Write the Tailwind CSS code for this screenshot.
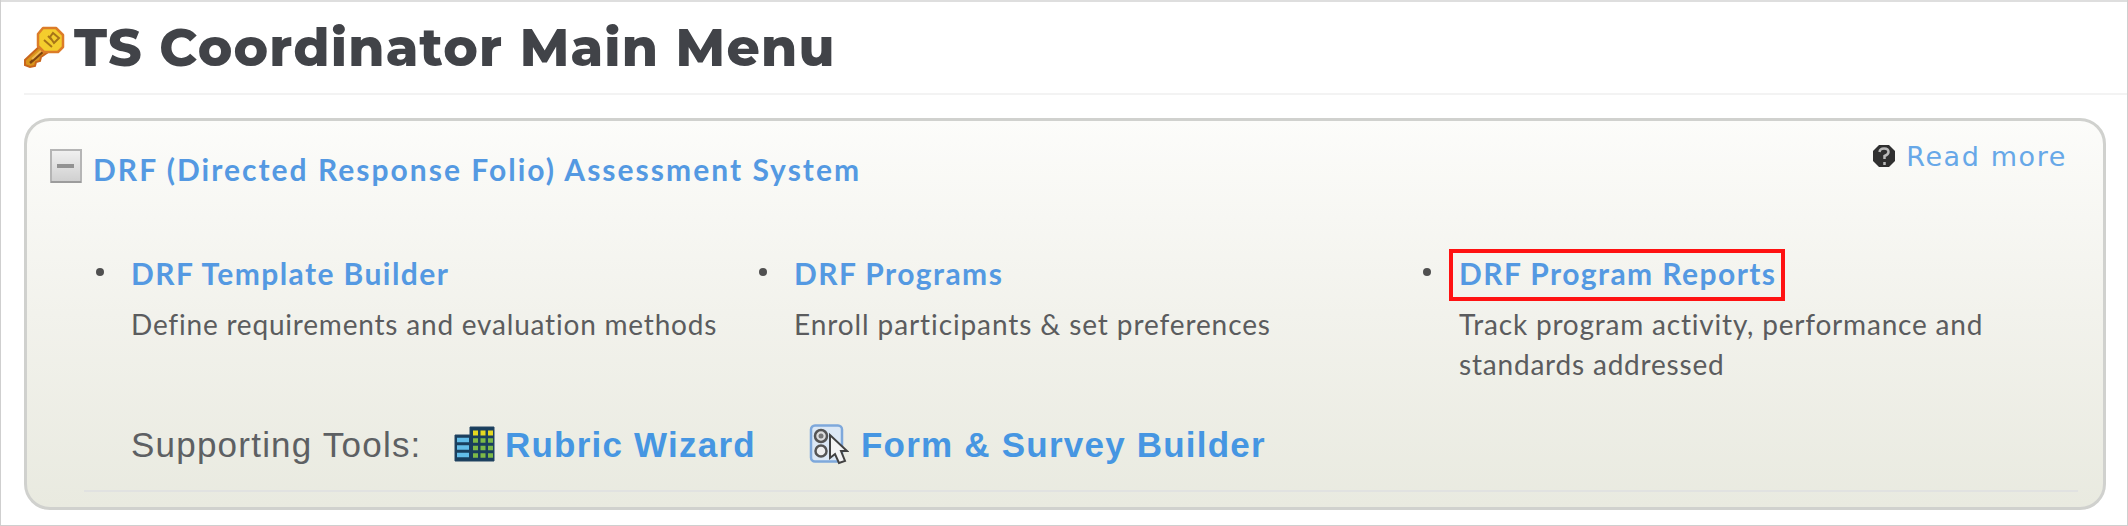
<!DOCTYPE html>
<html lang="en">
<head>
<meta charset="utf-8">
<title>TS Coordinator Main Menu</title>
<script src="https://cdn.jsdelivr.net/npm/@tailwindcss/browser@4"></script>
</head>
<body class="bg-white">
<main class="w-[2128px] h-[526px] overflow-hidden border-l border-r border-b border-[#cfcfcf] pl-[23px]">
  <div class="-ml-[23px] h-[2px] bg-[#dedede]"></div>
  <header class="flex h-[93px] border-b-2 border-[#f3f3f3]">
    <svg class="mt-[23px] w-[42px] h-[44px] shrink-0" viewBox="0 0 42 44">
      <path d="M17 20 L1 35 L1 40 L6 42 L11 41 L12 37 L16 36 L17 32 L24 27Z" fill="#d9951c" stroke="#c9651c" stroke-width="2"/>
      <path d="M6 38 L22 24" stroke="#7d4310" stroke-width="2.5"/>
      <path d="M8 34 L20 23" stroke="#f0b850" stroke-width="2"/>
      <path d="M19 3 H32 L39 10 V22 L34 27 H20 L14 21 V9Z" fill="#f4cd2d" stroke="#dc7c28" stroke-width="2.5" stroke-linejoin="round"/>
      <path d="M20 15 L28 22 M24 11 L28 15 M29 8 L35 13 L30 18 L26 12Z" stroke="#a77418" stroke-width="2" fill="none"/>
    </svg>
    <h1 class="ml-[8px] mt-[14px] h-[64px] leading-[64px] whitespace-nowrap font-['Montserrat','Inter',sans-serif] font-extrabold text-[52px] tracking-[1.22px] text-[#414348]">TS Coordinator Main Menu</h1>
  </header>
  <section class="mt-[23px] w-[2082px] h-[392px] rounded-[26px] border-[3px] border-[#d0d1ce] bg-linear-to-b from-[#fcfcfa] via-[#f2f2ec] to-[#e9eae0] flex flex-col">
    <div class="flex h-[108px] justify-between">
      <div class="flex">
        <svg class="ml-[23px] mt-[28px] w-[32px] h-[35px] shrink-0" viewBox="0 0 32 35">
          <defs><linearGradient id="g" x1="0" y1="0" x2="0" y2="1"><stop offset="0" stop-color="#f1f1f1"/><stop offset="1" stop-color="#cfcfcf"/></linearGradient></defs>
          <rect x="1" y="1" width="30" height="32" fill="url(#g)" stroke="#b5b5b5" stroke-width="2"/>
          <path d="M1 33H31" stroke="#9c9c9c" stroke-width="2"/>
          <rect x="7" y="15" width="17" height="4" fill="#929292"/>
        </svg>
        <a class="ml-[11px] mt-[28px] h-[40px] leading-[40px] whitespace-nowrap font-['Lato',sans-serif] font-bold text-[30px] tracking-[2.02px] text-[#5499e2]">DRF (Directed Response Folio) Assessment System</a>
      </div>
      <div class="flex mr-[36px]">
        <svg class="mt-[23px] w-[24px] h-[24px] shrink-0" viewBox="0 0 24 24">
          <path d="M7 1H17L23 7V17L17 23H7L1 17V7Z" fill="#303030"/>
          <path d="M7.500 8Q8 4.500 12 4.500Q16.500 4.500 16.500 8Q16.500 10.500 12.500 12V15M12.500 18V21" fill="none" stroke="#bbb" stroke-width="2.500"/>
        </svg>
        <a class="ml-[10px] mt-[16px] h-[40px] leading-[40px] whitespace-nowrap font-['DejaVu_Sans',sans-serif] text-[27px] tracking-[1.6px] text-[#67a8e8]">Read more</a>
      </div>
    </div>
    <ul class="flex mt-[20px] h-[144px] font-['Lato',sans-serif] text-[28px] tracking-[0.8px] text-[#5b5c5e]">
      <li class="flex w-[663px] pl-[69px]">
        <span class="mt-[19px] size-[8px] rounded-full bg-[#505050] shrink-0"></span>
        <div class="ml-[27px] whitespace-nowrap"><a class="block h-[50px] leading-[49px] font-bold text-[30px] tracking-[1.42px] text-[#5499e2]">DRF Template Builder</a><p class="leading-[40px] mt-[5px]">Define requirements and evaluation methods</p></div>
      </li>
      <li class="flex w-[664px] pl-[69px]">
        <span class="mt-[19px] size-[8px] rounded-full bg-[#505050] shrink-0"></span>
        <div class="ml-[27px] whitespace-nowrap"><a class="block h-[50px] leading-[49px] font-bold text-[30px] tracking-[1.42px] text-[#5499e2]">DRF Programs</a><p class="leading-[40px] mt-[5px] tracking-[0.9px]">Enroll participants &amp; set preferences</p></div>
      </li>
      <li class="flex pl-[69px]">
        <span class="mt-[19px] size-[8px] rounded-full bg-[#505050] shrink-0"></span>
        <div class="ml-[18px] whitespace-nowrap"><a class="block w-[336px] h-[52px] pl-[6px] leading-[41px] border-4 border-[#ff1212] font-bold text-[30px] tracking-[1.42px] text-[#5499e2]">DRF Program Reports</a><p class="ml-[10px] mt-[3px] leading-[40px]">Track program activity, performance and<br>standards addressed</p></div>
      </li>
    </ul>
    <div class="flex mt-[28px] ml-[57px] mr-[25px] h-[71px] border-b-2 border-[#e1e2e1] pl-[47px] font-['Liberation_Sans',sans-serif] text-[35px] tracking-[1.22px] whitespace-nowrap">
      <span class="w-[323px] leading-[48px] text-[#5d6063]">Supporting Tools:</span>
      <svg class="mt-[5px] w-[41px] h-[36px] shrink-0" viewBox="0 0 41 36">
        <path d="M1 9H16V1H40V35H1Z" fill="#193e5d" stroke="#244563" stroke-width="1"/>
        <path d="M3 14H15M3 21.500H15M3 29H15" stroke="#62bde9" stroke-width="4.500"/>
        <path d="M19 7H39" stroke="#e4d721" stroke-width="5" stroke-dasharray="5 2.500"/>
        <path d="M19 14.500H39M19 22H39M19 29.500H39" stroke="#7cb947" stroke-width="4.500" stroke-dasharray="5 2.500"/>
      </svg>
      <a class="ml-[10px] w-[304px] leading-[48px] font-bold text-[#4696e2]">Rubric Wizard</a>
      <svg class="mt-[3px] w-[40px] h-[42px] shrink-0" viewBox="0 0 40 42">
        <rect x="2" y="1.500" width="31" height="36" rx="4" fill="#dce8f5" stroke="#7ea8db" stroke-width="2.500"/>
        <circle cx="12" cy="12" r="6" fill="#ddd" stroke="#555" stroke-width="2.500"/><circle cx="12" cy="12" r="2.500" fill="#777"/>
        <circle cx="12" cy="27" r="5.500" fill="#eee" stroke="#555" stroke-width="2.500"/>
        <path d="M21 11V34L26 30L30 39L36 37L32 27H38Z" fill="#f4f4f4" stroke="#424242" stroke-width="2"/>
      </svg>
      <a class="ml-[12px] leading-[48px] font-bold text-[#4696e2]">Form &amp; Survey Builder</a>
    </div>
  </section>
</main>
</body>
</html>
